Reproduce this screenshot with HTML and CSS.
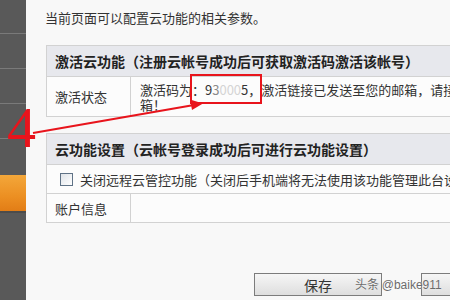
FILE: index.html
```html
<!DOCTYPE html>
<html lang="zh">
<head>
<meta charset="utf-8">
<link rel="stylesheet" href="styles.css">
</head>
<body>
<div class="page">
  <nav class="sidebar">
    <div class="nav-item"></div>
    <div class="nav-item"></div>
    <div class="nav-item"></div>
    <div class="nav-item"></div>
    <div class="nav-item nav-gap"></div>
    <div class="nav-item active"></div>
    <div class="nav-rest"></div>
  </nav>
  <main class="main">
    <p class="intro">当前页面可以配置云功能的相关参数。</p>

    <section class="panel">
      <div class="panel-head">激活云功能（注册云帐号成功后可获取激活码激活该帐号）</div>
      <div class="row row-tall">
        <div class="cell label">激活状态</div>
        <div class="cell value multi"><span class="line">激活码为：9<span class="blur">3</span><span class="blur2">000</span>5，激活链接已发送至您的邮箱，请接收邮件并按提示登录您的邮</span><span class="line">箱！</span></div>
      </div>
    </section>

    <section class="panel panel-2">
      <div class="panel-head">云功能设置（云帐号登录成功后可进行云功能设置）</div>
      <div class="row row-full">
        <label class="check-line"><span class="checkbox"></span>关闭远程云管控功能（关闭后手机端将无法使用该功能管理此台设备）</label>
      </div>
      <div class="row">
        <div class="cell label">账户信息</div>
        <div class="cell value"></div>
      </div>
    </section>

    <div class="actions">
      <button class="btn">保存</button>
      <button class="btn btn-2">取消</button>
    </div>
  </main>

  <div class="mark-box"></div>
  <div class="mark-num">4</div>
  <svg class="mark-arrow" width="450" height="300" viewBox="0 0 450 300">
    <line x1="33" y1="133" x2="194" y2="105" stroke="#e8141c" stroke-width="2"/>
    <polygon points="203,103.5 190,99.5 192,110" fill="#e8141c"/>
  </svg>
  <div class="watermark">头条 <span class="wm-latin">@baike911</span></div>
</div>
</body>
</html>
```

FILE: styles.css
```css
html, body {
  margin: 0;
  padding: 0;
}
body {
  width: 450px;
  height: 300px;
  overflow: hidden;
  font-family: "Noto Sans CJK SC", "Noto Sans", sans-serif;
  font-size: 13px;
  color: #333;
  background: #f8f8f8;
}
.page {
  position: relative;
  display: flex;
  width: 450px;
  height: 300px;
  overflow: hidden;
}
.sidebar {
  width: 26px;
  flex: none;
  background: #595959;
  display: flex;
  flex-direction: column;
}
.nav-item {
  height: 35px;
  border-bottom: 1px solid #7a7a7a;
  box-sizing: border-box;
}
.nav-item:first-child {
  height: 34px;
}
.nav-gap {
  height: 36px;
  border-bottom: none;
}
.nav-item.active {
  height: 36px;
  border-bottom: none;
  background: linear-gradient(#f3a73a, #ec8f22 60%, #e27d16);
}
.nav-rest {
  flex: 1;
  border-top: 2px solid #4c4c4c;
}
.main {
  flex: 1;
  min-width: 0;
  padding: 8px 0 0 20px;
  overflow: hidden;
}
.intro {
  margin: 0 0 0 -1px;
  height: 20px;
  line-height: 20px;
  white-space: nowrap;
  color: #333;
}
.panel {
  margin-top: 17px;
  width: 520px;
  border: 1px solid #d2d2d2;
  background: #fcfcfc;
}
.panel-2 {
  margin-top: 16px;
}
.panel-head {
  height: 30px;
  line-height: 30px;
  padding-left: 8px;
  background: #e7e8ed;
  border-bottom: 1px solid #d2d2d2;
  font-size: 14px;
  font-weight: bold;
  color: #222;
  white-space: nowrap;
}
.row {
  display: grid;
  grid-template-columns: 84px 1fr;
  height: 28px;
  border-bottom: 1px solid #d2d2d2;
}
.row:last-child {
  border-bottom: none;
}
.row-tall {
  height: 39px;
}
.row-full {
  display: flex;
  align-items: center;
}
.cell {
  display: flex;
  align-items: center;
  box-sizing: border-box;
  white-space: nowrap;
}
.label {
  padding-left: 8px;
  border-right: 1px solid #d2d2d2;
}
.value {
  padding-left: 9px;
}
.multi {
  display: flex;
  flex-direction: column;
  align-items: flex-start;
  justify-content: center;
}
.line {
  display: block;
  height: 15px;
  line-height: 15px;
}
.blur {
  color: #8a8a8a;
}
.blur2 {
  color: #d4d4d4;
}
.check-line {
  display: flex;
  align-items: center;
  padding-left: 13px;
  white-space: nowrap;
}
.checkbox {
  width: 11px;
  height: 11px;
  margin-right: 7px;
  border: 1px solid #5f7286;
  background: linear-gradient(135deg, #dfe3e8, #ffffff);
}
.actions {
  display: flex;
  margin-top: 50px;
  padding-left: 208px;
  gap: 39px;
}
.btn {
  width: 128px;
  height: 23px;
  padding: 0;
  border: 1px solid #7c7c7c;
  background: linear-gradient(#f6f6f6, #dedede);
  font-family: "Noto Sans CJK SC", sans-serif;
  font-size: 14px;
  color: #333;
  flex: none;
}
.mark-box {
  position: absolute;
  left: 190px;
  top: 74px;
  width: 68px;
  height: 26px;
  border: 2px solid #e8141c;
}
.mark-num {
  position: absolute;
  left: 7px;
  top: 99px;
  font-family: "Liberation Serif", serif;
  font-size: 58px;
  line-height: 58px;
  color: #e8141c;
}
.mark-arrow {
  position: absolute;
  left: 0;
  top: 0;
  pointer-events: none;
}
.watermark {
  position: absolute;
  left: 355px;
  top: 274px;
  font-size: 12px;
  line-height: 20px;
  color: #6b6b6b;
  text-shadow: 0 0 1px #fff;
  white-space: nowrap;
}
.wm-latin {
  font-family: "Liberation Sans", sans-serif;
  font-size: 12px;
}
```
